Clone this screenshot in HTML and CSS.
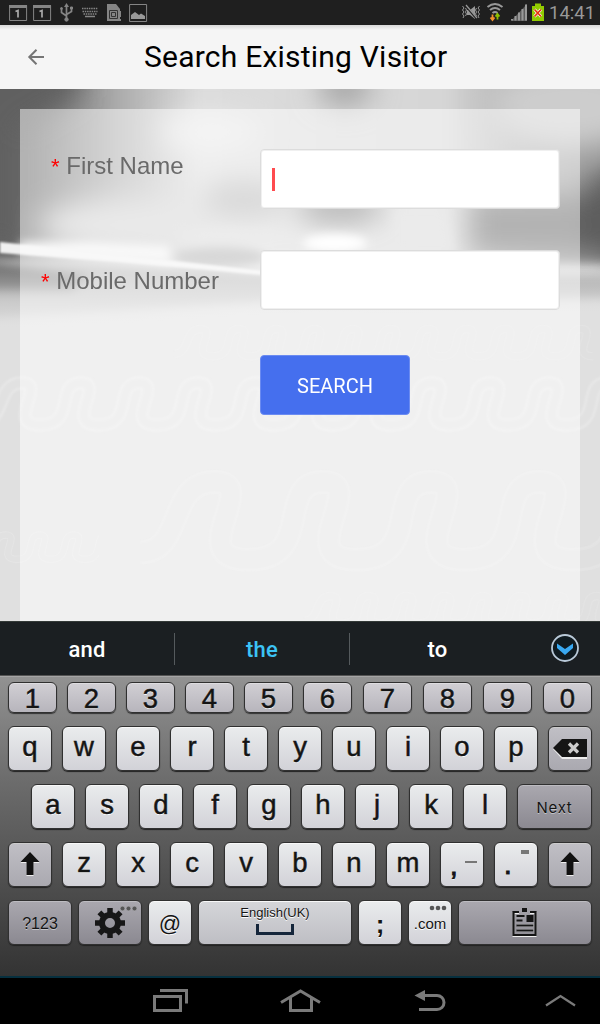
FILE: index.html
```html
<!DOCTYPE html>
<html lang="en">
<head>
<meta charset="utf-8">
<title>Search Existing Visitor</title>
<link rel="stylesheet" href="styles.css">
</head>
<body>
<div class="status">
  <svg width="140" height="24" viewBox="8 0 140 24" fill="none" stroke="#858585">
    <path d="M9.600 5.500h17v15h-17zM33.600 5.500h17v15h-17z"/><path d="M9 6.500h18M33 6.500h18" stroke-width="3"/>
    <path d="M15.500 11.500l2.500-1v7M39.500 11.500l2.500-1v7" stroke="#aaa" stroke-width="1.700"/>
    <path d="M66.500 19V6M66.500 16l-5-3.500V9M66.500 14.500l5-3V8" stroke-width="1.700"/><path d="M66.500 3l2.500 4h-5z" fill="#858585" stroke="none"/><circle cx="66.500" cy="19.500" r="1.700" fill="#858585"/><circle cx="61.500" cy="8.500" r="1" fill="#858585"/><path d="M70.500 7h2v2h-2z" fill="#858585"/>
    <path d="M82 8.500h16M82.500 11.500h15M83.500 14h13" stroke-width="1.600" stroke-dasharray="1.500 .8"/><path d="M85 16.500h10" stroke-width="1.500"/>
    <path d="M107 4h9l4 5v12h-13z" fill="#858585" stroke="none"/><path d="M109.500 10.500h8v8h-8z" stroke="#333"/><path d="M111.500 12.500h4v4h-4z" stroke="#333"/><path d="M120.500 11v6M120.500 19v2"/>
    <path d="M129.600 4.500h17v17h-17z"/><path d="M131 19v-4l4-3 4 3 2-1.500 4 2.500v3z" fill="#999" stroke="none"/>
  </svg>
  <div class="status-right">
    <svg width="84" height="24" viewBox="461 0 84 24" fill="none" stroke="#999">
      <path d="M467 10h3l5-4v13l-5-4h-3z" fill="#999" stroke="none"/><path d="M466 6l10 12" stroke="#222" stroke-width="2"/><path d="M466 5l11 13" stroke-width="1.200"/>
      <path d="M462.500 6l1.500 2-1.500 2 1.500 2-1.500 2 1.500 2-1 2M465.500 8l1 2-1 2 1 2-1 2M479.500 6l-1.500 2 1.500 2-1.500 2 1.500 2-1.500 2 1 2M476.500 8l-1 2 1 2-1 2 1 2"/>
      <path d="M487.500 7q7.500-6 15 0M490 10q5-4 10 0M492.500 13q2.500-2 5 0" stroke-width="2"/>
      <path d="M492.500 14.500v5M490.500 17.500l2 2.500 2-2.500" stroke="#f3912c" stroke-width="1.800"/><path d="M497.500 19.500v-5M495.500 16.500l2-2.500 2 2.500" stroke="#8dbf00" stroke-width="1.800"/>
      <path d="M511 21l16-17v17z" fill="#5c5c5c" stroke="none"/>
      <path d="M512 20.500v-1.500M515.500 20.500v-4.500M519 20.500v-8M522.500 20.500V9M526 20.500V4.500" stroke-width="2"/>
      <path d="M532 6h3V3.500h6V6h3v15h-12z" fill="#91cb00" stroke="none"/><path d="M534.500 9.500l6.500 7M541 9.500l-6.500 7" stroke="#fff" stroke-width="3"/><path d="M534.500 9.500l6.500 7M541 9.500l-6.500 7" stroke="#e53410" stroke-width="1.800"/>
    </svg>
    <span class="clock">14:41</span>
  </div>
</div>
<header class="header">
  <svg class="back" width="18" height="18" viewBox="0 0 18 18" fill="none" stroke="#757575" stroke-width="2"><path d="M17 9H2.500M9.500 1.800L2.300 9l7.200 7.200"/></svg>
  <h1>Search Existing Visitor</h1>
</header>
<main class="content">
  <svg class="backdrop" width="600" height="532" viewBox="0 89 600 532">
    <defs>
      <linearGradient id="sky"><stop offset="0" stop-color="#606060"/><stop offset=".13" stop-color="#6c6c6c"/><stop offset=".24" stop-color="#a8a8a8"/><stop offset=".36" stop-color="#dcdcdc"/><stop offset=".7" stop-color="#d6d6d6"/><stop offset=".82" stop-color="#a9a9a9"/><stop offset="1" stop-color="#8c8c8c"/></linearGradient>
      <linearGradient id="floor" x2="0" y2="1"><stop offset="0" stop-color="#e0e0e0" stop-opacity="0"/><stop offset="1" stop-color="#e0e0e0"/></linearGradient>
      <filter id="b5" x="-50%" y="-100%" width="200%" height="300%"><feGaussianBlur stdDeviation="5"/></filter>
      <filter id="b15" x="-50%" y="-100%" width="200%" height="300%"><feGaussianBlur stdDeviation="14"/></filter>
      <filter id="b1" x="-5%" y="-50%" width="110%" height="200%"><feGaussianBlur stdDeviation=".8"/></filter>
      <path id="wave" d="M-16 38c24 0 14-38 40-38s-18 42 18.500 42s14-42 40-42s-18 42 18.500 42s14-42 40-42s-18 42 18.500 42s14-42 40-42s-18 42 18.500 42s14-42 40-42s-18 42 18.500 42s14-42 40-42s-18 42 18.500 42s14-42 40-42s-18 42 18.500 42s14-42 40-42s-18 42 18.500 42s14-42 40-42s-18 42 18.500 42s14-42 40-42s-18 42 18.500 42s14-42 40-42s-18 42 18.500 42"/>
      <g id="ribbon" fill="none"><use href="#wave" stroke="#eaeaea" stroke-width="13"/><use href="#wave" stroke="#e1e1e1" stroke-width="9.500"/></g>
    </defs>
    <rect y="89" width="600" height="532" fill="#e0e0e0"/>
    <rect x="-60" y="40" width="720" height="222" fill="url(#sky)" filter="url(#b5)"/>
    <g filter="url(#b15)">
      <ellipse cx="570" cy="105" rx="80" ry="42" fill="#cdcdcd"/>
      <ellipse cx="345" cy="88" rx="28" ry="18" fill="#a4a4a4"/>
      <ellipse cx="210" cy="132" rx="50" ry="18" fill="#e9e9e9"/>
      <ellipse cx="130" cy="225" rx="90" ry="26" fill="#d4d4d4"/>
      <ellipse cx="245" cy="200" rx="45" ry="18" fill="#b0b0b0"/>
      <ellipse cx="340" cy="208" rx="45" ry="15" fill="#686868"/>
      <rect x="470" y="195" width="180" height="60" fill="#666"/>
      <ellipse cx="630" cy="215" rx="50" ry="50" fill="#5c5c5c"/>
      <path d="M-60 40H80V95L18 130V250H-60z" fill="#606060"/>
    </g>
    <g filter="url(#b5)">
      <path d="M-20 259l300 16h340v24l-360 4-280 18z" fill="#acacac"/>
      <path d="M-20 260l110 16-20 16h-100z" fill="#6c6c6c"/>
      <ellipse cx="335" cy="243" rx="32" ry="9" fill="#fff"/>
      <path d="M395 210h50l10 42h-60z" fill="#d6d6d6"/>
      <ellipse cx="225" cy="236" rx="50" ry="7" fill="#d8d8d8"/>
      <ellipse cx="220" cy="257" rx="46" ry="10" fill="#b0b0b0"/>
      <path d="M20 242l70-1 80 5 0 17-85-4-65-6z" fill="#f2f2f2"/>
    </g>
    <rect y="262" width="600" height="68" fill="url(#floor)"/>
    <rect y="330" width="600" height="40" fill="#e0e0e0"/>
    <path d="M0 242L120 255L285 273L285 277L120 262L0 253z" fill="#f0f0f0" filter="url(#b1)"/>
    <g filter="url(#b1)"><use href="#ribbon" x="-2" y="383"/></g>
    <g opacity=".4">
      <use href="#ribbon" transform="translate(185 329) scale(.65)"/>
      <use href="#ribbon" transform="translate(170 482) scale(1.85)"/>
      <use href="#ribbon" transform="translate(315 596) scale(.65)"/>
    </g>
    <svg x="0" y="525" width="99" height="45"><use href="#ribbon" transform="translate(-8 10) scale(.58)" opacity=".5"/></svg>
  </svg>
  <form class="panel">
    <label class="name" for="first"><b>*</b> First Name</label><div class="field" id="first"><i></i></div>
    <label class="mobile" for="mobile"><b>*</b> Mobile Number</label><div class="field" id="mobile"></div>
    <button class="search" type="button">SEARCH</button>
  </form>
</main>
<section class="suggest">
  <span>and</span><span class="active">the</span><span>to</span>
  <svg width="30" height="30" viewBox="0 0 30 30"><circle cx="15" cy="15" r="13" fill="#101b21" stroke="#b9c9d8" stroke-width="1.800"/><path d="M7 10.500l8 5.500 8-5.500v4.500l-8 7-8-7z" fill="#39a9f2"/></svg>
</section>
<section class="keyboard">
  <div class="row nums"><kbd>1</kbd><kbd>2</kbd><kbd>3</kbd><kbd>4</kbd><kbd>5</kbd><kbd>6</kbd><kbd>7</kbd><kbd>8</kbd><kbd>9</kbd><kbd>0</kbd></div>
  <div class="row"><kbd>q</kbd><kbd>w</kbd><kbd>e</kbd><kbd>r</kbd><kbd>t</kbd><kbd>y</kbd><kbd>u</kbd><kbd>i</kbd><kbd>o</kbd><kbd>p</kbd><kbd class="mid"><svg width="36" height="22" viewBox="0 0 36 22"><path d="M1 12l9-9h25v19H10z" fill="#eee"/><path d="M1 11l9-9h25v18H10z" fill="#151515"/><path d="M17 6.500l9 9M26 6.500l-9 9" stroke="#ccc" stroke-width="3.200"/></svg></kbd></div>
  <div class="row home"><kbd>a</kbd><kbd>s</kbd><kbd>d</kbd><kbd>f</kbd><kbd>g</kbd><kbd>h</kbd><kbd>j</kbd><kbd>k</kbd><kbd>l</kbd><kbd class="dark next">Next</kbd></div>
  <div class="row"><kbd class="mid"><svg width="20" height="26" viewBox="0 0 20 26"><path d="M.5 12L10 2l9.500 10h-6v13h-7V12z" fill="#eee"/><path d="M.5 11L10 1l9.500 10h-6v13h-7V11z" fill="#111"/></svg></kbd><kbd>z</kbd><kbd>x</kbd><kbd>c</kbd><kbd>v</kbd><kbd>b</kbd><kbd>n</kbd><kbd>m</kbd><kbd class="comma">,<i></i></kbd><kbd class="dot">.<i></i></kbd><kbd class="mid"><svg width="20" height="26" viewBox="0 0 20 26"><path d="M.5 12L10 2l9.500 10h-6v13h-7V12z" fill="#eee"/><path d="M.5 11L10 1l9.500 10h-6v13h-7V11z" fill="#111"/></svg></kbd></div>
  <div class="row last">
    <kbd class="dark sym">?123</kbd>
    <kbd class="dark gear"><svg width="60" height="40" viewBox="80 902 60 40"><g fill="none" stroke="#171717"><circle cx="110" cy="922" r="8" stroke-width="6"/><path d="M110 907v7M110 930v7M95 922h7M118 922h7M99.400 911.400l5 5M115.600 927.600l5 5M120.600 911.400l-5 5M104.400 927.600l-5 5" stroke-width="5.500"/></g><g fill="#555" stroke="#b5b5b9" stroke-width=".4"><circle cx="122.500" cy="907.500" r="2.300"/><circle cx="128.500" cy="907.500" r="2.300"/><circle cx="134.500" cy="907.500" r="2.300"/></g></svg></kbd>
    <kbd class="at">@</kbd>
    <kbd class="space"><span>English(UK)</span><svg width="38" height="12" viewBox="0 0 38 12"><path d="M1.500 0v9.500h35V0" fill="none" stroke="#15263b" stroke-width="3"/></svg></kbd>
    <kbd class="semi">;</kbd>
    <kbd class="com"><svg width="20" height="6" viewBox="0 0 20 6" fill="#555"><circle cx="4" cy="3" r="2.300"/><circle cx="10" cy="3" r="2.300"/><circle cx="16" cy="3" r="2.300"/></svg>.com</kbd>
    <kbd class="dark clip"><svg width="26" height="32" viewBox="0 0 26 32" fill="none"><g stroke="#eee" transform="translate(0 1)"><path d="M7 5H1.500v23h22V5H18M5 17.500h17M5 22.500h17" stroke-width="2"/></g><g stroke="#151515"><path d="M7 5H1.500v23h22V5H18" stroke-width="2.200"/><path d="M4.500 9h8M4.500 13.500h6M4.500 18.500h17M4.500 23.500h17" stroke-width="2"/></g><path d="M10 1h5v4h-5zM14.500 8h7v7h-7z" fill="#151515"/></svg></kbd>
  </div>
</section>
<nav class="nav">
  <svg width="600" height="46" viewBox="0 978 600 46" fill="none" stroke="#7a7a7a" stroke-width="3">
    <path d="M154.500 996.500h26v14h-26zM160 990.500h26.500v13"/>
    <path d="M281 1002.500l19.500-11.500 19.500 11.500M290.500 997v13.500h21V997"/>
    <path d="M421 995.500h16a7 7 0 0 1 0 14h-18"/><path d="M414.500 995.500l10.500-5.500v11z" fill="#7a7a7a" stroke="none"/>
    <path d="M546 1005.500l14.500-9.500 14.500 9.500" stroke-width="2.300"/>
  </svg>
</nav>
</body>
</html>
```
FILE: styles.css
```css
* { box-sizing: border-box; }
body { margin: 0; width: 600px; height: 1024px; display: flex; flex-direction: column; overflow: hidden; background: #000; font-family: Roboto, sans-serif; }
svg { display: block; flex: none; }
.status { height: 25px; flex: none; display: flex; justify-content: space-between; padding: 0 6px 0 8px; background: #1f1f1f; }
.status-right { display: flex; gap: 4px; }
.clock { color: #999; font-size: 18.500px; line-height: 26px; width: 45px; white-space: nowrap; }
.header { height: 64px; flex: none; display: flex; align-items: center; padding-left: 27px; background: linear-gradient(#d8d8d8, #f5f5f5 5px); }
.header h1 { margin: 0 0 0 99px; font-size: 30px; line-height: 36px; font-weight: 400; color: #000; letter-spacing: .22px; white-space: nowrap; }
.content { position: relative; height: 532px; flex: none; padding: 20px 20px 0; overflow: hidden; }
.backdrop { position: absolute; left: 0; top: 0; }
.panel { position: relative; height: 512px; padding: 40px 20px 0; background: rgba(255,255,255,.5); display: grid; grid-template-columns: 220px 300px; grid-template-rows: 101px 105px 60px; align-items: start; }
.panel label { font: 24px/30px "Liberation Sans", sans-serif; color: #6a6a6a; white-space: nowrap; }
.panel b { color: #f00; font-weight: 400; font-size: 22px; }
.panel .name { padding: 2px 0 0 11px; }
.panel .mobile { padding: 16px 0 0 1px; }
.field { height: 60px; width: 300px; background: #fff; border: 1px solid #dcdcdc; box-shadow: inset 0 0 0 1px #f0f0f0; border-radius: 4px; padding: 18px 11px; }
.field i { display: block; width: 3px; height: 23px; background: #ff4b4f; }
.search { grid-column: 2; width: 150px; height: 60px; border: 1px solid #6b8bf1; border-radius: 4px; background: #456fee; color: #fff; font: 20px Roboto, sans-serif; padding: 2px 0 0; }
.suggest { height: 54px; flex: none; display: flex; align-items: center; background: #1b1f22; border-top: 1px solid #343a38; color: #fff; font-size: 22px; font-weight: 500; letter-spacing: .2px; }
.suggest span { width: 175px; height: 32px; line-height: 33px; text-align: center; border-right: 1px solid #555a5d; }
.suggest span:nth-child(3) { border: 0; }
.suggest .active { color: #3cc3f5; }
.suggest svg { margin: -2px 0 0 25px; }
.keyboard { height: 303px; flex: none; padding: 6px 8px 0; border-top: 1px solid #555; border-bottom: 2px solid #07303f; background: linear-gradient(#929292, #6d6d6d 34%, #333); display: flex; flex-direction: column; gap: 13px; box-shadow: inset 0 1px #a5a5a5; }
.row { display: flex; gap: 10px; height: 45px; flex: none; }
.home { padding-left: 23px; }
.last { gap: 6px; }
kbd { position: relative; width: 44px; height: 45px; flex: none; display: flex; align-items: center; justify-content: center; padding-bottom: 4px; border: 1px solid #303030; border-radius: 6px; background: linear-gradient(#eaeced, #d2d2d8); box-shadow: inset 0 1px #f8f8f8, 0 1px 1px #222; color: #141414; font: 27.500px/40px "Liberation Sans", sans-serif; -webkit-text-stroke: .5px #141414; text-shadow: 0 1px #fff; }
.nums { height: 31px; }
.nums kbd { width: 49px; height: 31px; padding: 3px 0 0; line-height: 28px; background: linear-gradient(#d1cfd4, #b7b5bc); box-shadow: inset 0 1px #dedde0, 0 1px 1px #333; }
.nums kbd:nth-child(n+7) { margin-left: 1px; }
kbd.mid { background: linear-gradient(#c0bfc5, #aaa9b0); box-shadow: inset 0 1px #ccc, 0 1px 1px #222; padding: 0 0 2px; }
kbd.dark { background: linear-gradient(#aaa8af, #8b8991); box-shadow: inset 0 1px #bdbcc1, 0 1px 1px #222; text-shadow: 0 1px #c4c4c8; -webkit-text-stroke: 0; padding: 0; }
kbd.next { width: 75px; font: 15px Inter, sans-serif; letter-spacing: .7px; padding-top: 2px; }
kbd.sym { width: 64px; font-size: 16px; padding-top: 2px; }
kbd.gear { width: 64px; }
kbd.clip { width: 134px; }
kbd.at { font-size: 22px; padding: 2px 0 0; -webkit-text-stroke: 0; }
kbd.space { width: 154px; flex-direction: column; justify-content: flex-start; gap: 1px; padding: 4px 0 0; font-size: 13px; line-height: 16px; -webkit-text-stroke: 0; background: linear-gradient(#d5d6d9, #bebec4); }
kbd.space svg { margin-top: 2px; }
kbd.comma { justify-content: flex-start; padding: 3px 0 0 9px; -webkit-text-stroke-width: 1px; }
kbd.dot { justify-content: flex-start; padding: 0 0 0 9px; -webkit-text-stroke-width: 1px; }
.comma i, .dot i { position: absolute; background: #777; width: 12px; height: 2px; left: 24px; top: 18px; }
.dot i { width: 8px; height: 4px; left: 26px; top: 7px; }
kbd.semi { padding: 3px 0 0; font-weight: 700; -webkit-text-stroke: 0; font-size: 26px; }
kbd.com { font-size: 15px; -webkit-text-stroke: 0; padding: 2px 0 0; }
.com svg { position: absolute; right: 3px; top: 4px; }
.nav { height: 46px; flex: none; background: #000; }
```
